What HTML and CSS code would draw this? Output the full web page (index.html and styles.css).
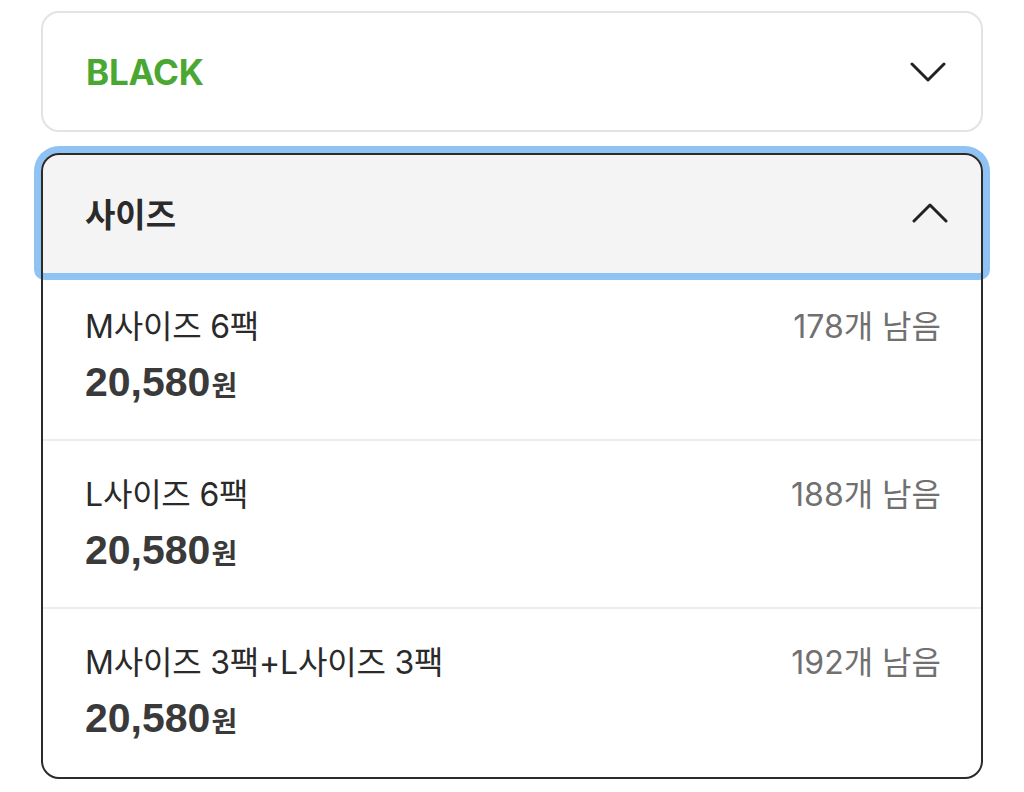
FILE: index.html
```html
<!DOCTYPE html>
<html lang="ko">
<head>
<meta charset="utf-8">
<link rel="stylesheet" href="styles.css">
</head>
<body>
<div class="wrap">
  <div class="select select-color">
    <span class="select-value">BLACK</span>
    <svg class="chev" width="36" height="22" viewBox="0 0 36 22"><polyline points="2,3 18,19 34,3" fill="none" stroke="#222" stroke-width="3" stroke-linecap="round" stroke-linejoin="round"/></svg>
  </div>
  <div class="card">
    <div class="card-head">
      <span class="head-title">사이즈</span>
      <svg class="chev" width="36" height="22" viewBox="0 0 36 22"><polyline points="2,19 18,3 34,19" fill="none" stroke="#222" stroke-width="3" stroke-linecap="round" stroke-linejoin="round"/></svg>
    </div>
    <ul class="options">
      <li class="option">
        <div class="option-top"><span class="option-name">M사이즈 6팩</span><span class="option-stock">178개 남음</span></div>
        <div class="option-price">20,580<span class="won">원</span></div>
      </li>
      <li class="option">
        <div class="option-top"><span class="option-name">L사이즈 6팩</span><span class="option-stock">188개 남음</span></div>
        <div class="option-price">20,580<span class="won">원</span></div>
      </li>
      <li class="option">
        <div class="option-top"><span class="option-name">M사이즈 3팩+L사이즈 3팩</span><span class="option-stock">192개 남음</span></div>
        <div class="option-price">20,580<span class="won">원</span></div>
      </li>
    </ul>
  </div>
</div>
</body>
</html>
```

FILE: styles.css
```css
* { box-sizing: border-box; }
html, body { margin: 0; padding: 0; background: #fff; }
body {
  font-family: Inter, "Noto Sans CJK KR", sans-serif;
  color: #2a2a2a;
}
.wrap {
  width: 1024px;
  padding: 11px 41px 0 41px;
}
.select {
  display: flex;
  align-items: center;
  justify-content: space-between;
}
.select-color {
  height: 121px;
  border: 2px solid #e3e3e3;
  border-radius: 18px;
  padding: 0 35px 0 43px;
}
.select-value {
  color: #4aa832;
  font-weight: 700;
  font-size: 35px;
  letter-spacing: -0.2px;
}
.chev { display: block; }
.card {
  position: relative;
  margin-top: 21px;
  border-radius: 18px;
  background: #fff;
  padding-bottom: 4px;
}
.card::after {
  content: "";
  position: absolute;
  inset: 0;
  border: 2px solid #2b2b2b;
  border-radius: 18px;
  pointer-events: none;
}
.card-head {
  height: 120px;
  display: flex;
  align-items: center;
  justify-content: space-between;
  padding: 0 35px 0 44px;
  background: #f4f4f4;
  border-radius: 18px 18px 4px 4px;
  box-shadow: 0 0 0 7px #8fc3f4;
}
.head-title {
  font-family: "Noto Sans CJK KR", sans-serif;
  font-weight: 700;
  font-size: 33px;
  color: #2b2b2b;
}
.options {
  list-style: none;
  margin: 0;
  padding: 0;
}
.option {
  padding: 30px 42px 32px 44px;
  border-bottom: 2px solid #ededed;
}
.option:last-child { border-bottom: none; }
.option-top {
  display: flex;
  justify-content: space-between;
  align-items: center;
  height: 42px;
}
.option-name {
  font-size: 32px;
  color: #2a2a2a;
  letter-spacing: -0.2px;
}
.option-stock {
  font-size: 32px;
  color: #707070;
}
.option-price {
  margin-top: 12px;
  height: 50px;
  line-height: 50px;
  font-family: "Liberation Sans", "Noto Sans CJK KR", sans-serif;
  font-weight: 700;
  font-size: 41px;
  color: #3a3a3a;
}
.won {
  font-family: "Noto Sans CJK KR", sans-serif;
  font-size: 28px;
  font-weight: 700;
  margin-left: 1px;
}
```
